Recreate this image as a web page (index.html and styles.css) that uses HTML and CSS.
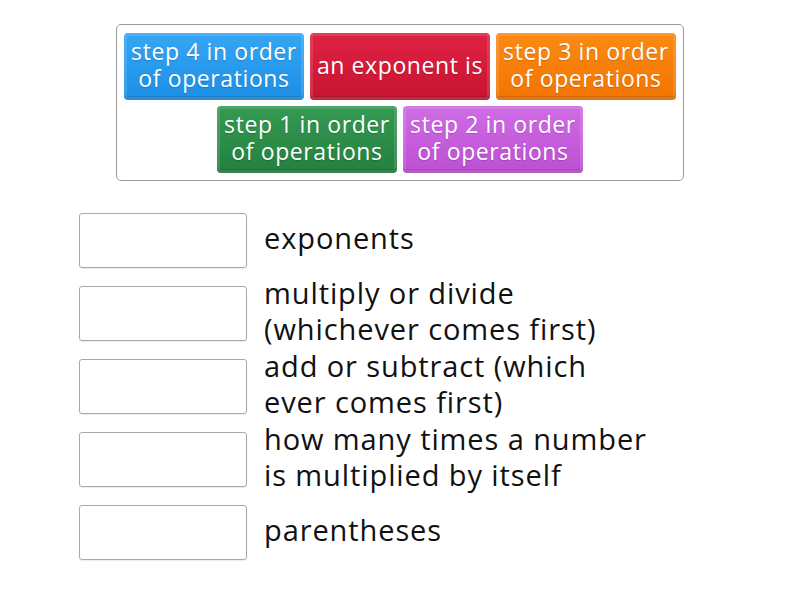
FILE: index.html
```html
<!DOCTYPE html>
<html>
<head>
<meta charset="utf-8">
<link rel="stylesheet" href="styles.css">
</head>
<body>
<div class="bank">
  <div class="tile blue">step 4 in order<br>of operations</div>
  <div class="tile red">an exponent is</div>
  <div class="tile orange">step 3 in order<br>of operations</div>
  <div class="tile green">step 1 in order<br>of operations</div>
  <div class="tile purple">step 2 in order<br>of operations</div>
</div>
<div class="rows">
  <div class="row"><div class="slot"></div><div class="label">exponents</div></div>
  <div class="row"><div class="slot"></div><div class="label">multiply or divide<br>(whichever comes first)</div></div>
  <div class="row"><div class="slot"></div><div class="label">add or subtract (which<br>ever comes first)</div></div>
  <div class="row"><div class="slot"></div><div class="label">how many times a number<br>is multiplied by itself</div></div>
  <div class="row"><div class="slot"></div><div class="label">parentheses</div></div>
</div>
</body>
</html>
```
FILE: styles.css
```css
html, body {
  margin: 0;
  padding: 0;
  background: #fff;
}
body {
  font-family: "Open Sans", Lato, sans-serif;
  font-variant-ligatures: none;
  width: 800px;
  height: 600px;
  overflow: hidden;
}
.bank {
  box-sizing: border-box;
  width: 568px;
  margin: 24px auto 0;
  border: 1px solid #9a9a9a;
  border-radius: 5px;
  padding: 8px 7px 7px;
  display: flex;
  flex-wrap: wrap;
  justify-content: center;
  gap: 6px;
}
.tile {
  box-sizing: border-box;
  width: 180px;
  height: 67px;
  border-radius: 4px;
  color: #fff;
  font-size: 23px;
  font-weight: 500;
  letter-spacing: 0.6px;
  line-height: 27px;
  text-align: center;
  display: flex;
  align-items: center;
  justify-content: center;
  padding-bottom: 3px;
  white-space: nowrap;
  text-shadow: 0 1px 1px rgba(0,0,0,0.18);
  box-shadow: inset 0 0 0 3px rgba(255,255,255,0.12), inset 0 -4px 0 rgba(0,0,0,0.12);
}
.blue { background: linear-gradient(#36a6f5, #1b8fe6); }
.red { background: linear-gradient(#df2244, #c8142f); }
.orange { background: linear-gradient(#fb8a14, #f27400); }
.green { background: linear-gradient(#349a52, #24803f); }
.purple { background: linear-gradient(#d06ce6, #bc4fd2); }
.rows {
  margin: 32px 0 0 79px;
  display: flex;
  flex-direction: column;
  gap: 18px;
}
.row {
  height: 55px;
  display: flex;
  align-items: center;
}
.slot {
  box-sizing: border-box;
  width: 168px;
  height: 55px;
  border: 1px solid #a8a8a8;
  border-radius: 3px;
  box-shadow: 0 1px 1px rgba(0,0,0,0.08);
  flex: none;
}
.label {
  margin-left: 17px;
  margin-bottom: 5px;
  font-size: 29px;
  letter-spacing: 0.9px;
  line-height: 36px;
  color: #111;
  white-space: nowrap;
}
```
